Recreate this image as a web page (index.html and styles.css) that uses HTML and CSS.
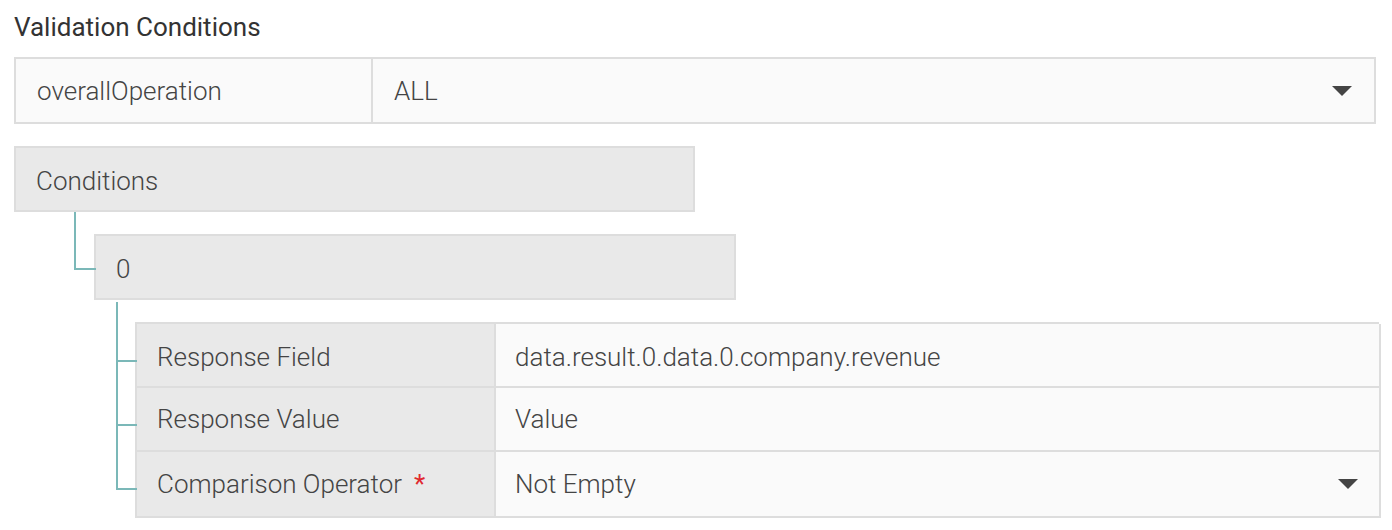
FILE: index.html
```html
<!DOCTYPE html>
<html>
<head>
<meta charset="utf-8">
<link rel="stylesheet" href="styles.css">
</head>
<body>
<div class="page">
  <h2 class="title">Validation Conditions</h2>
  <div class="op-row">
    <div class="op-label">overallOperation</div>
    <div class="op-value">
      <span>ALL</span>
      <svg class="caret" width="20" height="10" viewBox="0 0 20 10"><path d="M0 0 L20 0 L10 10 Z" fill="#444"/></svg>
    </div>
  </div>
  <div class="tree">
    <div class="node cond">Conditions</div>
    <div class="children children-1">
      <div class="branch">
        <div class="node zero">0</div>
        <div class="children children-2">
          <div class="grid">
            <div class="cell label branch-row first">Response Field</div>
            <div class="cell value first">data.result.0.data.0.company.revenue</div>
            <div class="cell label branch-row">Response Value</div>
            <div class="cell value">Value</div>
            <div class="cell label branch-row last">Comparison Operator <span class="req">*</span></div>
            <div class="cell value select">
              <span>Not Empty</span>
              <svg class="caret" width="20" height="10" viewBox="0 0 20 10"><path d="M0 0 L20 0 L10 10 Z" fill="#444"/></svg>
            </div>
          </div>
        </div>
      </div>
    </div>
  </div>
</div>
</body>
</html>
```
FILE: styles.css
```css
* { box-sizing: border-box; }
html, body { margin: 0; background: #fff; }
body {
  font-family: Roboto, "Liberation Sans", sans-serif;
  color: #444;
}
.page {
  padding: 12px 16px 0 14px;
  width: 1392px;
}
.title {
  margin: 0;
  font-size: 26px;
  font-weight: 400;
  color: #333;
  line-height: 30px;
  height: 45px;
}
.op-row {
  display: flex;
  width: 1362px;
  height: 67px;
  border: 2px solid #dddddd;
  background: #fafafa;
  font-size: 26px;
  font-weight: 300;
}
.op-label {
  width: 357px;
  border-right: 2px solid #dddddd;
  display: flex;
  align-items: center;
  padding-left: 21px;
}
.op-value {
  flex: 1;
  display: flex;
  align-items: center;
  justify-content: space-between;
  padding-left: 21px;
  padding-right: 22px;
}
.tree {
  margin-top: 22px;
  font-size: 26px;
  font-weight: 300;
}
.node {
  height: 66px;
  border: 2px solid #dddddd;
  background: #e9e9e9;
  display: flex;
  align-items: center;
  padding-left: 20px;
  padding-top: 4px;
}
.cond { width: 681px; }
.zero { width: 642px; }
.children {
  position: relative;
  padding-top: 22px;
}
.children-1 { margin-left: 60px; padding-left: 20px; }
.children-2 { margin-left: 22px; padding-left: 19px; }
.branch { position: relative; }
.branch::before {
  content: "";
  position: absolute;
  left: -20px;
  top: -22px;
  width: 20px;
  height: 56px;
  border-left: 2px solid #7bb8b8;
  border-bottom: 2px solid #7bb8b8;
}
.grid {
  display: grid;
  grid-template-columns: 359px 885px;
  width: 1244px;
  border-top: 2px solid #dddddd;
  border-left: 2px solid #dddddd;
}
.cell {
  height: 64px;
  display: flex;
  align-items: center;
  border-right: 2px solid #dddddd;
  border-bottom: 2px solid #dddddd;
  padding-left: 20px;
}
.cell.first { padding-top: 3px; }
.label { background: #e9e9e9; position: relative; }
.value { background: #fafafa; padding-left: 19px; }
.grid .cell:nth-child(5), .grid .cell:nth-child(6) { height: 66px; }
.select { justify-content: space-between; padding-right: 21px; }
.req { color: #e0282e; margin-left: 12px; font-weight: 400; }
.branch-row::before {
  content: "";
  position: absolute;
  left: -21px;
  top: -34px;
  width: 19px;
  height: 70px;
  border-left: 2px solid #7bb8b8;
  border-bottom: 2px solid #7bb8b8;
}
.grid .cell:first-child::before { top: -22px; height: 58px; }
.last::before { height: 70px; }
.caret { display: block; }
```
